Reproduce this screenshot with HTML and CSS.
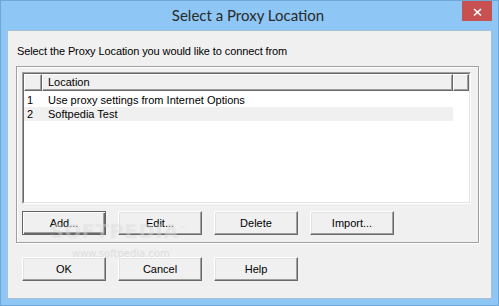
FILE: index.html
```html
<!DOCTYPE html>
<html lang="en">
<head>
    <meta charset="UTF-8">
    <title>Select a Proxy Location</title>
    <link rel="stylesheet" href="styles.css">
</head>
<body>
    <div class="window">
        <div class="titlebar">
            <span></span>
            <span class="title">Select a Proxy Location</span>
            <button class="close" aria-label="Close">
                <svg width="30" height="20" viewBox="0 0 30 20">
                    <path d="M12 8 L19 14.5 M19 8 L12 14.5" stroke="#fff" stroke-width="1.7" fill="none"/>
                </svg>
            </button>
        </div>

        <div class="client">
            <p class="label">Select the Proxy Location you would like to connect from</p>

            <div class="group">
                <div class="list">
                    <div class="list-inner">
                        <div class="list-head">
                            <div class="hcell col-num"></div>
                            <div class="hcell col-loc">Location</div>
                            <div class="hcell col-end"></div>
                        </div>
                        <div class="rows">
                            <div class="row">
                                <span class="col-num">1</span>
                                <span class="col-loc">Use proxy settings from Internet Options</span>
                            </div>
                            <div class="row selected">
                                <span class="col-num">2</span>
                                <span class="col-loc">Softpedia Test</span>
                            </div>
                        </div>
                    </div>
                </div>

                <div class="buttons">
                    <button class="btn default">Add...</button>
                    <button class="btn">Edit...</button>
                    <button class="btn">Delete</button>
                    <button class="btn">Import...</button>
                </div>
            </div>

            <div class="buttons bottom">
                <button class="btn">OK</button>
                <button class="btn">Cancel</button>
                <button class="btn">Help</button>
            </div>

            <!-- watermark from the screenshot -->
            <div class="mark">SOFTPEDIA<sup>™</sup></div>
            <div class="mark-url">www.softpedia.com</div>
        </div>
    </div>
</body>
</html>
```

FILE: styles.css
```css
body {
    margin: 0;
    font-family: "Liberation Sans", Arial, sans-serif;
    font-size: 11px;
    color: #000;
}

.window {
    width: 499px;
    height: 306px;
    box-sizing: border-box;
    background: #8ec6f5;
    border: 1px solid #6ea7d8;
    display: flex;
    flex-direction: column;
}

.titlebar {
    height: 29px;
    display: grid;
    grid-template-columns: 1fr auto 1fr;
    align-items: start;
    padding-right: 6px;
}

.title {
    font-family: Lato, "Open Sans", sans-serif;
    font-size: 15px;
    color: #2a2a2a;
    line-height: 19px;
    padding-top: 5px;
    padding-left: 3px;
}

.close {
    justify-self: end;
    width: 30px;
    height: 20px;
    padding: 0;
    border: none;
    background: #c75050;
    display: block;
}

.close svg {
    display: block;
}

.client {
    position: relative;
    margin: 0 6px 6px 6px;
    flex: 1;
    background: #f0f0f0;
    border: 1px solid #a9bfd3;
    display: flex;
    flex-direction: column;
    align-items: flex-start;
}

.label {
    margin: 14px 0 0 9px;
    line-height: 13px;
    letter-spacing: -0.1px;
}

.group {
    margin: 8px 0 0 8px;
    width: 463px;
    height: 177px;
    box-sizing: border-box;
    border: 1px solid #a0a0a0;
    box-shadow: inset 1px 1px 0 #fff, 1px 1px 0 #fff;
    padding: 5px 0 0 5px;
}

.list {
    width: 449px;
    height: 132px;
    box-sizing: border-box;
    border: 1px solid;
    border-color: #a0a0a0 #fff #fff #a0a0a0;
}

.list-inner {
    height: 100%;
    box-sizing: border-box;
    border: 1px solid;
    border-color: #696969 #e3e3e3 #e3e3e3 #696969;
    background: #fff;
}

.list-head {
    display: flex;
    height: 17px;
}

.hcell {
    box-sizing: border-box;
    background: #f0f0f0;
    border: 1px solid;
    border-color: #fff #696969 #696969 #fff;
    box-shadow: inset -1px -1px 0 #a0a0a0;
    line-height: 15px;
}

.list-head .col-num {
    width: 18px;
}

.list-head .col-loc {
    width: 411px;
    padding-left: 5px;
}

.list-head .col-end {
    flex: 1;
}

.rows {
    padding-top: 2px;
}

.row {
    display: flex;
    width: 429px;
    height: 14px;
    line-height: 14px;
}

.row.selected {
    background: #f0f0f0;
}

.row .col-num {
    width: 18px;
    box-sizing: border-box;
    padding-left: 3px;
}

.row .col-loc {
    padding-left: 6px;
}

.buttons {
    display: flex;
    gap: 12px;
    margin-top: 7px;
}

.buttons.bottom {
    margin: 14px 0 0 14px;
}

.btn {
    width: 84px;
    height: 24px;
    padding: 0;
    box-sizing: border-box;
    font-family: "Liberation Sans", Arial, sans-serif;
    font-size: 11px;
    color: #000;
    background: #f0f0f0;
    border: 1px solid;
    border-color: #fff #696969 #696969 #fff;
    box-shadow: inset -1px -1px 0 #a0a0a0, inset 1px 1px 0 #e3e3e3;
}

.btn.default {
    border-color: #646464;
    box-shadow: inset 1px 1px 0 #fff, inset -1px -1px 0 #696969, inset -2px -2px 0 #a0a0a0;
}

.mark {
    position: absolute;
    left: 42px;
    top: 189px;
    font-family: "DejaVu Sans", sans-serif;
    font-size: 19px;
    font-weight: bold;
    letter-spacing: 1px;
    color: rgba(255, 255, 255, 0.3);
    text-shadow: 0 0 1px rgba(160, 160, 160, 0.25);
    pointer-events: none;
}

.mark sup {
    font-size: 7px;
    font-weight: normal;
}

.mark-url {
    position: absolute;
    left: 64px;
    top: 217px;
    font-family: "DejaVu Sans", sans-serif;
    font-size: 10px;
    color: rgba(190, 190, 190, 0.4);
    pointer-events: none;
}
```
